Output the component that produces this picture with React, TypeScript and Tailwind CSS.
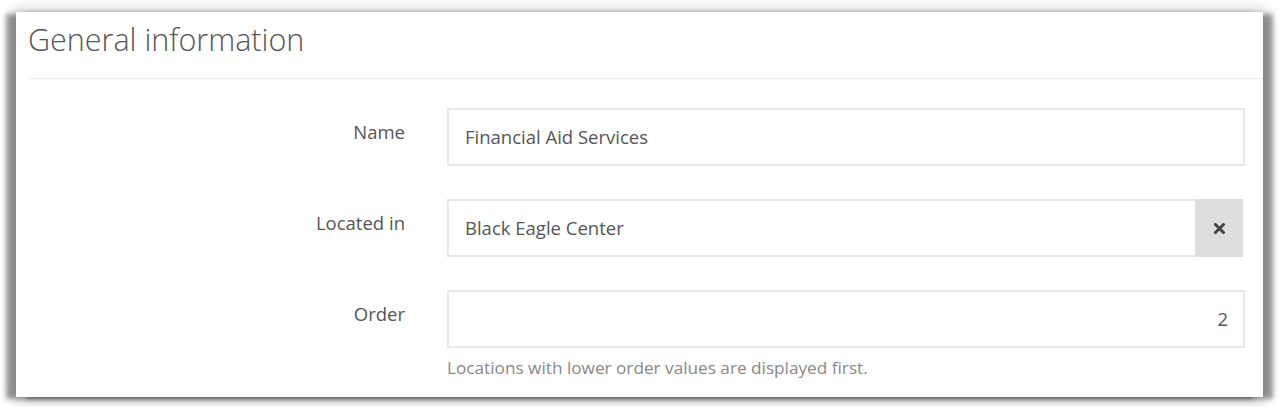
export default function App() {
  return (
    <div className="min-h-screen bg-white pt-[12px] pl-[16px] font-['Open_Sans',sans-serif]">
      <div className="w-[1247px] h-[385px] bg-white shadow-[-10px_2px_5px_rgba(0,0,0,0.38),10px_2px_5px_rgba(0,0,0,0.38),0_1px_12px_3px_rgba(0,0,0,0.22)]">
        {/* Header */}
        <div className="ml-[12px] h-[67px] border-b border-[#ececec] pt-[6px]">
          <h2 className="text-[30.5px] leading-[42px] font-light text-[#555]">General information</h2>
        </div>

        <div className="pt-[29px] flex flex-col gap-[33px]">
          {/* Name */}
          <div className="flex">
            <label className="w-[389px] text-right pt-[11px] text-[18.5px] leading-[26px] text-[#555]">Name</label>
            <div className="ml-[42px] w-[798px] h-[58px] border-2 border-[#e8e8e8] flex items-center px-[16px] text-[18.5px] text-[#555]">
              Financial Aid Services
            </div>
          </div>

          {/* Located in */}
          <div className="flex">
            <label className="w-[389px] text-right pt-[11px] text-[18.5px] leading-[26px] text-[#555]">Located in</label>
            <div className="ml-[42px] w-[796px] h-[58px] flex">
              <div className="flex-1 border-2 border-r-0 border-[#e8e8e8] flex items-center px-[16px] text-[18.5px] text-[#555]">
                Black Eagle Center
              </div>
              <button className="w-[48px] h-full bg-[#dedede] flex items-center justify-center">
                <svg width="11" height="11" viewBox="0 0 11 11">
                  <path d="M1.5 1.5 L9.5 9.5 M9.5 1.5 L1.5 9.5" stroke="#444" strokeWidth="3" strokeLinecap="round" />
                </svg>
              </button>
            </div>
          </div>

          {/* Order */}
          <div className="flex">
            <label className="w-[389px] text-right pt-[11px] text-[18.5px] leading-[26px] text-[#555]">Order</label>
            <div className="ml-[42px] w-[798px]">
              <div className="h-[58px] border-2 border-[#e8e8e8] flex items-center justify-end pl-[16px] pr-[15px] text-[18.5px] text-[#555]">
                2
              </div>
              <p className="mt-[9px] text-[17.2px] leading-[22px] text-[#888]">
                Locations with lower order values are displayed first.
              </p>
            </div>
          </div>
        </div>
      </div>
    </div>
  );
}
